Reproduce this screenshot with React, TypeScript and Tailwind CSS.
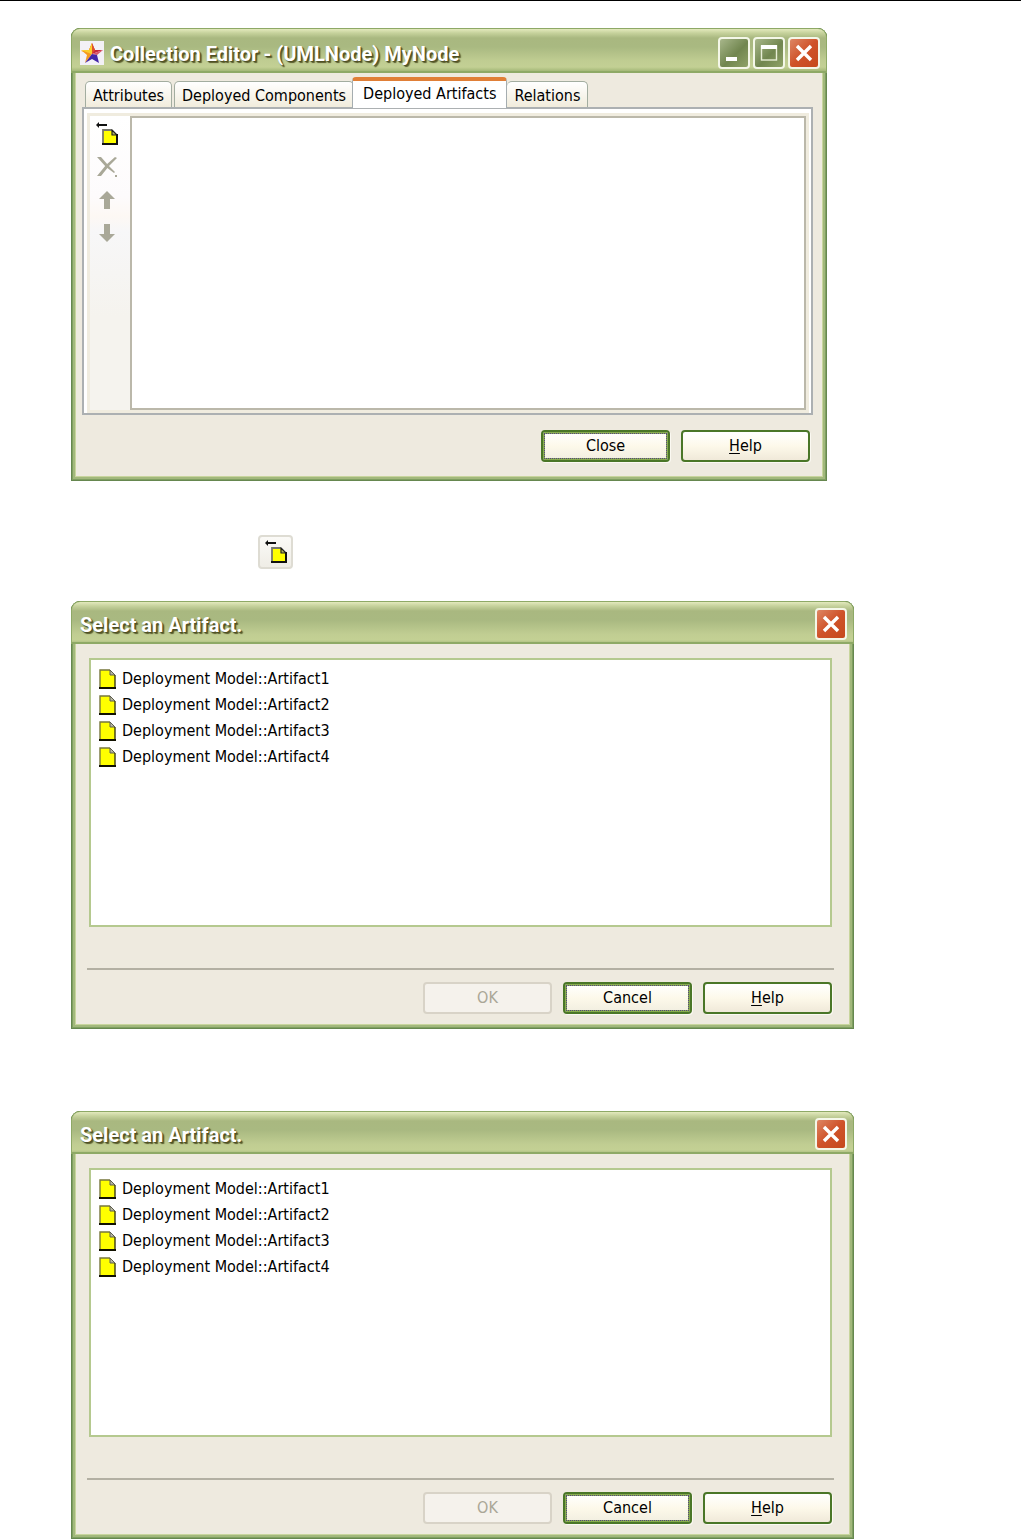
import React from 'react';

interface WindowProps {
  title: string;
  icon?: React.ReactNode;
  resizable?: boolean;
  className?: string;
  children: React.ReactNode;
}

interface PushButtonProps {
  children: React.ReactNode;
  focused?: boolean;
  disabled?: boolean;
}

const ARTIFACTS = [
  'Deployment Model::Artifact1',
  'Deployment Model::Artifact2',
  'Deployment Model::Artifact3',
  'Deployment Model::Artifact4',
];

const TABS = ['Attributes', 'Deployed Components', 'Deployed Artifacts', 'Relations'];

const StarIcon = () => (
  <svg viewBox="0 0 24 24" className="h-6 w-6 flex-shrink-0" aria-hidden="true">
    <rect width="24" height="24" fill="#f3f1f6" />
    <path d="M12 2L12 13L1 10L9 9Z" fill="#f6b21c" />
    <path d="M12 2L15 9L23 9L12 13Z" fill="#c8283c" />
    <path d="M1 9L12 13L5 22L7 14Z" fill="#f59a1d" />
    <path d="M23 9L17 14L12 13Z" fill="#d8566a" />
    <path d="M12 13L17 14L19 22L12 18L5 22Z" fill="#4426a8" />
    <path d="M12 2L15 9L12 13L9 9Z" fill="#e0512c" />
    <path d="M12 2L9 9L1 9L12 13Z" fill="#fbcf2d" />
  </svg>
);

const PageIcon = () => (
  <svg viewBox="0 0 17 20" className="h-5 w-[17px] flex-shrink-0" aria-hidden="true">
    <path d="M1 1H11L16 6V19H1Z" fill="#ffff00" />
    <path d="M1 19V1H11" fill="none" stroke="#77773c" strokeWidth="1.4" />
    <path d="M11 1V6H16Z" fill="#b5b5a0" stroke="#5c5c4c" strokeLinejoin="round" />
    <path d="M16 6V19" fill="none" stroke="#3a3a10" strokeWidth="1.4" />
    <path d="M0 19H17" stroke="#111100" strokeWidth="2" />
  </svg>
);

const AddArtifactIcon = () => (
  <svg viewBox="0 0 24 24" className="h-6 w-6" aria-hidden="true">
    <path d="M8 8H17L22 13V22H8Z" fill="#ffff00" />
    <path d="M8 22V8H17" fill="none" stroke="#77776c" strokeWidth="1.8" />
    <path d="M17 8V13H22Z" fill="#b5b560" stroke="#222" strokeWidth="1.2" strokeLinejoin="round" />
    <path d="M22 12V22H7" fill="none" stroke="#111" strokeWidth="2" />
    <path d="M3 3H12" stroke="#111" strokeWidth="2" />
    <path d="M1 3L4 0V6Z" fill="#111" />
  </svg>
);

const DeleteIcon = () => (
  <svg viewBox="0 0 24 24" className="h-6 w-6" aria-hidden="true">
    <path d="M2 2L6 2L13 10L20 17L19 18L11 12Z" fill="#a9a898" />
    <path d="M20 2L22 3L14 11L6 21L2 21L11 10Z" fill="#a9a898" />
    <rect x="20" y="20" width="2" height="2" fill="#a9a898" />
  </svg>
);

const ArrowIcon = ({ down = false }: { down?: boolean }) => (
  <svg viewBox="0 0 24 24" className="h-6 w-6" aria-hidden="true">
    <path d={down ? 'M9 3H15V13H20L12 21L4 13H9Z' : 'M9 21H15V11H20L12 3L4 11H9Z'} fill="#a9a898" />
  </svg>
);

const captionButton =
  'flex h-8 w-8 items-center justify-center rounded-[4px] border-2 border-[#f4f7e8]';

const Window = ({ title, icon, resizable, className = '', children }: WindowProps) => (
  <section
    className={`w-full overflow-hidden rounded-t-[9px] bg-[#eeeadf] shadow-[inset_0_0_0_1px_#66874f,inset_0_0_0_2px_#7f9f61,inset_0_0_0_4px_#a2b87c,inset_0_0_0_5px_#c8d59d] ${className}`}
  >
    <header
      className={`flex items-center rounded-t-[9px] border border-b-2 border-[#8ea966] bg-[linear-gradient(180deg,#e3e9bd_0px,#c6d29c_4px,#a9b880_9px,#a9b981_18px,#c0cd92_32px,#c3d094_38px,#a4b878_42px)] pr-[6px] pl-2 ${
        resizable ? 'h-[45px] pt-[6px]' : 'h-[43px] pt-1'
      }`}
    >
      {icon}
      <h2
        className={`flex-1 truncate pt-[2px] font-['Roboto','Liberation_Sans',sans-serif] text-[20px] leading-7 font-bold text-white [text-shadow:1px_1px_1px_#4c4d22,2px_2px_1px_#5d6030] ${
          icon ? 'ml-[6px]' : ''
        }`}
      >
        {title}
      </h2>
      <div className="flex gap-[3px]">
        {resizable && (
          <>
            <button
              type="button"
              aria-label="Minimize"
              className={`${captionButton} bg-[linear-gradient(135deg,#a8b78b,#71864f_55%,#8fa267)]`}
            >
              <svg viewBox="0 0 28 28" className="h-7 w-7">
                <rect x="6" y="18" width="11" height="4" fill="#fff" />
              </svg>
            </button>
            <button
              type="button"
              aria-label="Maximize"
              className={`${captionButton} bg-[linear-gradient(135deg,#a8b78b,#71864f_55%,#8fa267)]`}
            >
              <svg viewBox="0 0 28 28" className="h-7 w-7">
                <rect x="6.5" y="7" width="15" height="14" fill="none" stroke="#e8eed6" strokeWidth="1.4" />
                <rect x="6" y="6" width="16" height="4" fill="#fff" />
              </svg>
            </button>
          </>
        )}
        <button
          type="button"
          aria-label="Close window"
          className={`${captionButton} bg-[linear-gradient(135deg,#dd8664,#cf5229_50%,#c64a1d)]`}
        >
          <svg viewBox="0 0 28 28" className="h-7 w-7">
            <path d="M7 7L21 21M21 7L7 21" stroke="#fff" strokeWidth="3.4" />
          </svg>
        </button>
      </div>
    </header>
    {children}
  </section>
);

const PushButton = ({ children, focused, disabled }: PushButtonProps) => {
  let look =
    'border-[#4a7627] bg-linear-to-b from-white via-[#fdf9ea] to-[#f0e9d9] text-black shadow-[1px_1px_0_#fbf9f2]';
  if (focused) {
    look =
      'border-[#4a7627] bg-linear-to-b from-white via-[#fdf9ea] to-[#f1eee0] text-black shadow-[inset_0_0_0_2px_#88ac50,1px_1px_0_#fbf9f2]';
  }
  if (disabled) {
    look = 'border-[#d8d3c7] bg-[#f5f2ec] text-[#aaa797]';
  }
  return (
    <button
      type="button"
      disabled={disabled}
      className={`h-8 w-[129px] rounded-[4px] border-2 p-px text-[16px] leading-5 ${look}`}
    >
      <span
        className={`flex h-full items-center justify-center border ${
          focused ? 'border-dotted border-[#55457e]' : 'border-transparent'
        }`}
      >
        <span>{children}</span>
      </span>
    </button>
  );
};

const HelpButton = () => (
  <PushButton>
    <span className="underline underline-offset-2">H</span>elp
  </PushButton>
);

const Tab = ({ label, active }: { label: string; active: boolean }) => (
  <button
    type="button"
    role="tab"
    aria-selected={active}
    className={
      active
        ? '-mb-px -ml-1 h-[31px] rounded-t-[4px] border-x border-t-4 border-x-[#a5adb0] border-t-[#e07f37] bg-white px-[10px] pb-px whitespace-nowrap'
        : 'h-[26px] rounded-t-[5px] border border-b-0 border-[#a3ada0] bg-linear-to-b from-white to-[#f1ecdc] px-[7px] pt-[2px] whitespace-nowrap last:-ml-[2px] last:border-l-0'
    }
  >
    {label}
  </button>
);

const CollectionEditor = () => (
  <Window title="Collection Editor - (UMLNode) MyNode" icon={<StarIcon />} resizable className="max-w-[756px]">
    <div className="px-[11px] pt-1 pb-[19px]">
      <div role="tablist" className="flex items-end gap-[2px] pr-1 pl-[3px] text-[16px] leading-5">
        {TABS.map((tab) => (
          <Tab key={tab} label={tab} active={tab === 'Deployed Artifacts'} />
        ))}
      </div>
      <div className="mr-[3px] border-2 border-[#acb0b2] bg-white pt-1 pr-[2px] pl-[3px]">
        <div className="flex h-[300px] border-3 border-[#f0ecdf]">
          <div className="flex w-10 flex-shrink-0 flex-col items-start gap-[9px] bg-[linear-gradient(180deg,#ffffff_0px,#fdfbfc_80px,#fdf8f4_100px,#f7f7f8_115px,#f5f3ee_200px)] pt-[6px] pl-[5px]">
            <button type="button" aria-label="Add artifact">
              <AddArtifactIcon />
            </button>
            <button type="button" aria-label="Delete" disabled>
              <DeleteIcon />
            </button>
            <button type="button" aria-label="Move up" disabled>
              <ArrowIcon />
            </button>
            <button type="button" aria-label="Move down" disabled>
              <ArrowIcon down />
            </button>
          </div>
          <div className="flex-1 border-2 border-[#bbb8aa] bg-white" />
        </div>
      </div>
      <div className="mt-[15px] mr-[6px] flex justify-end gap-[11px]">
        <PushButton focused>Close</PushButton>
        <HelpButton />
      </div>
    </div>
  </Window>
);

const SelectArtifactDialog = ({ className = '' }: { className?: string }) => (
  <Window title="Select an Artifact." className={`max-w-[783px] ${className}`}>
    <div className="px-4 pt-[14px] pb-[15px]">
      <ul className="mr-[6px] ml-[2px] h-[269px] border-2 border-[#b5c98f] bg-white px-2 pt-[6px] text-[16px] leading-5">
        {ARTIFACTS.map((artifact) => (
          <li key={artifact} className="flex h-[26px] items-center gap-[6px]">
            <PageIcon />
            <span>{artifact}</span>
          </li>
        ))}
      </ul>
      <hr className="mt-[41px] mr-1 border-t-2 border-[#b3b0a3]" />
      <div className="mt-3 mr-[6px] flex justify-end gap-[11px]">
        <PushButton disabled>OK</PushButton>
        <PushButton focused>Cancel</PushButton>
        <HelpButton />
      </div>
    </div>
  </Window>
);

export default function App() {
  return (
    <main className="border-t border-black bg-white pt-[27px] pl-[71px] font-['DejaVu_Sans_Condensed','Noto_Sans',sans-serif] text-black">
      <CollectionEditor />
      <button
        type="button"
        aria-label="Add artifact"
        className="mt-[54px] ml-[187px] flex h-[34px] w-[35px] items-center justify-center rounded-[4px] border-2 border-[#dedcd3] bg-linear-to-b from-[#fbfaf7] to-[#efede6]"
      >
        <AddArtifactIcon />
      </button>
      <SelectArtifactDialog className="mt-8" />
      <SelectArtifactDialog className="mt-[82px]" />
    </main>
  );
}
